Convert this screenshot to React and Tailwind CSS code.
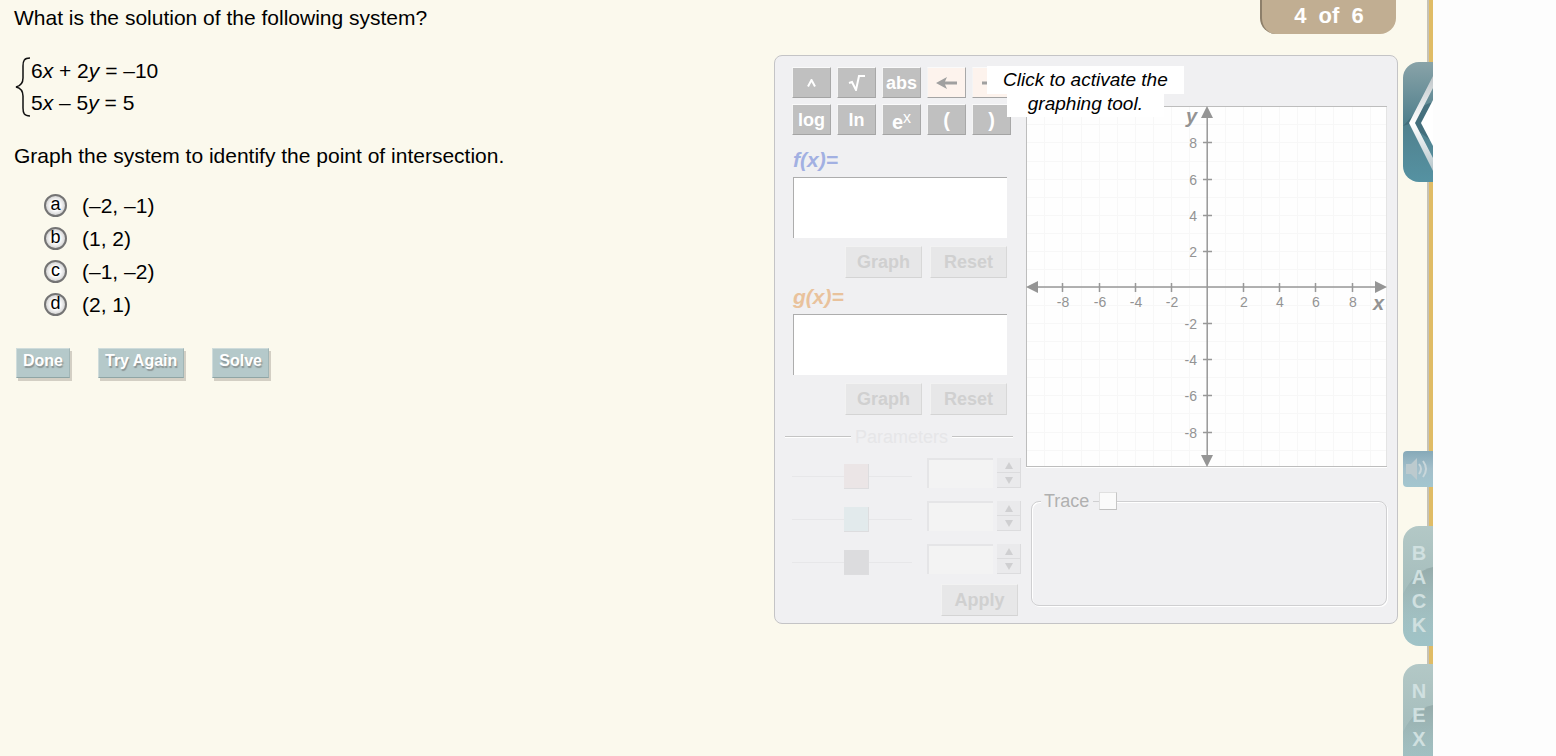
import React, { useState } from 'react';
import clsx from 'clsx';

const choices = [
  { id: 'a', text: '(–2, –1)' },
  { id: 'b', text: '(1, 2)' },
  { id: 'c', text: '(–1, –2)' },
  { id: 'd', text: '(2, 1)' },
];

const parameters = [
  { id: 'red', thumb: '[&::-webkit-slider-thumb]:bg-[#ebe5e6]' },
  { id: 'teal', thumb: '[&::-webkit-slider-thumb]:bg-[#e2eaec]' },
  { id: 'gray', thumb: '[&::-webkit-slider-thumb]:bg-[#dcdcde]' },
];

const ticks = [-8, -6, -4, -2, 2, 4, 6, 8];
const gridLines = Array.from({ length: 19 }, (_, i) => i - 9);

// graph units to svg pixels
const px = (n) => Math.round(181 + n * 18.07);

function ActionButton({ children }) {
  return (
    <button
      type="button"
      className="h-[30px] border border-t-[#cfdcdb] border-l-[#cfdcdb] border-r-[#a2b6b6] border-b-[#8fa5a5] bg-[#b5c9ca] px-[6px] pb-[4px] text-[16px] leading-[24px] font-bold text-white shadow-[2px_3px_0_#d3cfc4] [text-shadow:1px_2px_1px_#8b9494]"
    >
      {children}
    </button>
  );
}

function Key({ label, light, children }) {
  return (
    <button
      type="button"
      aria-label={label}
      className={clsx(
        'flex h-[31px] w-[39px] items-center justify-center border border-t-[#fafafa] border-l-[#f4f4f4] border-r-[#a8a8a8] border-b-[#a4a4a4] text-[18px] leading-[24px] font-bold',
        light ? 'bg-[#fdf3ed] text-[#a0a0a0]' : 'bg-[#c0c0c0] text-white'
      )}
    >
      {children}
    </button>
  );
}

function ToolButton({ children }) {
  return (
    <button
      type="button"
      className="h-8 w-[77px] border border-t-[#f2f2f2] border-l-[#f2f2f2] border-r-[#d8d8d8] border-b-[#d4d4d4] bg-[#e7e7e8] text-[18px] leading-[24px] font-bold text-[#d0d0d0]"
    >
      {children}
    </button>
  );
}

function FunctionEntry({ id, label, labelClass }) {
  return (
    <div className="pr-[14px] pl-2">
      <label htmlFor={id} className={clsx('block text-[21px] leading-[24px] font-bold italic', labelClass)}>
        {label}
      </label>
      <input
        id={id}
        type="text"
        className="mt-[5px] block h-[61px] w-full border-t border-l border-[#adadad] bg-white px-2 text-[21px] text-gray-600 outline-none"
      />
      <div className="mt-2 flex justify-end gap-2">
        <ToolButton>Graph</ToolButton>
        <ToolButton>Reset</ToolButton>
      </div>
    </div>
  );
}

function ParameterRow({ id, thumb }) {
  return (
    <div className="flex items-start pl-[7px]">
      <input
        type="range"
        aria-label={`${id} parameter`}
        defaultValue="55"
        className={clsx(
          'mt-[3px] h-[30px] w-[120px] appearance-none bg-[linear-gradient(#e7e7e9,#e7e7e9)] bg-[length:100%_1px] bg-center bg-no-repeat [&::-webkit-slider-thumb]:size-[25px] [&::-webkit-slider-thumb]:appearance-none [&::-webkit-slider-thumb]:border-r [&::-webkit-slider-thumb]:border-b [&::-webkit-slider-thumb]:border-[#dddddf]',
          thumb
        )}
      />
      <input
        type="text"
        aria-label={`${id} value`}
        className="ml-[15px] h-[30px] w-[66px] border-t-2 border-l-2 border-[#e5e5e7] bg-[#f3f3f3] outline-none"
      />
      <div className="ml-1 flex w-6 flex-col">
        <button type="button" aria-label={`Increase ${id}`} className="flex h-[15px] items-center justify-center border-r border-b border-[#dcdcde] bg-[#eaeaec]">
          <svg width="8" height="7" viewBox="0 0 8 7" fill="#cfcfd1"><path d="M4 0L8 7H0z" /></svg>
        </button>
        <button type="button" aria-label={`Decrease ${id}`} className="flex h-[15px] items-center justify-center border-r border-b border-[#dcdcde] bg-[#eaeaec]">
          <svg width="8" height="7" viewBox="0 0 8 7" fill="#cfcfd1"><path d="M4 7L8 0H0z" /></svg>
        </button>
      </div>
    </div>
  );
}

function Graph() {
  return (
    <svg
      viewBox="0 0 361 361"
      className="block w-full border-b border-white bg-[#fefefe]"
      fontFamily="Liberation Sans, Arial, sans-serif"
      fontSize="14"
      fill="#939393"
    >
      {gridLines.map((n) => (
        <g key={n} stroke="#f7f7f7">
          <path d={`M${px(n) + 0.5} 1V360`} />
          <path d={`M1 ${px(n) + 0.5}H360`} />
        </g>
      ))}
      <path d="M0.5 361V0.5H361" fill="none" stroke="#bdbdbd" />
      <path d="M0 360.5H361" stroke="#bdbdbd" />
      <path d="M360.5 1V360" stroke="#e4e4e4" />
      <path d="M181.2 8V353M8 181H353" stroke="#989898" strokeWidth="1.5" />
      <path d="M181 0l6 12h-12zM181 361l6-12h-12zM0 181l12-6v12zM361 181l-12-6v12z" fill="#959595" />
      {ticks.map((n) => (
        <g key={n}>
          <path d={`M${px(n) + 0.5} 177v9M177 ${px(-n) + 0.5}h9`} stroke="#989898" strokeWidth="1.5" />
          <text x={px(n) + 1} y="201" textAnchor="middle">{n}</text>
          <text x="171" y={px(-n) + 6} textAnchor="end">{n}</text>
        </g>
      ))}
      <text x="160" y="17" fontSize="20" fontWeight="bold" fontStyle="italic">y</text>
      <text x="347" y="204" fontSize="20" fontWeight="bold" fontStyle="italic">x</text>
    </svg>
  );
}

function GraphingTool() {
  const [trace, setTrace] = useState(false);

  return (
    <section className="relative flex gap-[5px] rounded-lg border border-[#c4c4c6] bg-[#f0f0f2] px-[10px] pt-[11px] pb-[7px]">
      <div className="w-[236px] shrink-0">
        <div className="grid w-fit grid-cols-5 gap-[6px] pl-[7px]">
          <Key label="power">
            <svg width="9" height="8" viewBox="0 0 9 8" fill="none" stroke="#fff" strokeWidth="2"><path d="M1 7.500L4.500 1L8 7.500" /></svg>
          </Key>
          <Key label="square root">
            <svg width="18" height="16" viewBox="0 0 18 16" fill="none" stroke="#fff" strokeWidth="2"><path d="M1 8l3-1 4 8L11 1h6" /></svg>
          </Key>
          <Key>abs</Key>
          <Key light label="move left">
            <svg width="21" height="14" viewBox="0 0 21 14" fill="currentColor"><path d="M0 7L11 1L9 5.500H21V8.500H9L11 13z" /></svg>
          </Key>
          <Key light label="move right">
            <svg width="21" height="14" viewBox="0 0 21 14" fill="currentColor"><path d="M21 7L10 1L12 5.500H1V8.500H12L10 13z" /></svg>
          </Key>
          <Key>log</Key>
          <Key>ln</Key>
          <Key>
            <span className="flex items-end pt-1 text-[20px] leading-[22px]">
              e<sup className="top-0 self-start text-[16px] leading-[14px] font-normal">x</sup>
            </span>
          </Key>
          <Key><span className="text-[20px]">(</span></Key>
          <Key><span className="text-[20px]">)</span></Key>
        </div>

        <div className="mt-[13px] flex flex-col gap-[7px]">
          <FunctionEntry id="fx" label="f(x)=" labelClass="text-[#a2b0e2]" />
          <FunctionEntry id="gx" label="g(x)=" labelClass="text-[#e9c29c]" />
        </div>

        <h3 className="mt-3 flex items-center gap-1 pr-2 text-[18px] leading-[20px] text-[#e6e6e8]">
          <span className="h-[2px] w-[66px] border-t border-b border-t-[#c4c4c4] border-b-white" />
          Parameters
          <span className="h-[2px] flex-1 border-t border-b border-t-[#c4c4c4] border-b-white" />
        </h3>

        <div className="mt-[11px] flex flex-col gap-[10px]">
          {parameters.map((p) => (
            <ParameterRow key={p.id} id={p.id} thumb={p.thumb} />
          ))}
        </div>

        <div className="mt-[7px] flex justify-end pr-[3px]">
          <ToolButton>Apply</ToolButton>
        </div>
      </div>

      <div className="flex-1 pt-[39px]">
        <Graph />
        <fieldset className="mt-[23px] ml-[5px] h-[115px] rounded-lg border border-[#cfcfd1] shadow-[inset_1px_1px_0_#fff,1px_1px_0_#fff]">
          <legend className="ml-[9px] bg-[#f0f0f2] pl-[3px]">
            <label className="flex items-center text-[18px] leading-[20px] text-[#b0b0b0]">
              Trace
              <span className="ml-1 h-px w-[6px] bg-[#cfcfd1]" />
              <input
                type="checkbox"
                checked={trace}
                onChange={(e) => setTrace(e.target.checked)}
                className="size-[18px] appearance-none border border-t-[#e0e0e0] border-l-[#e0e0e0] border-r-[#c6c6c6] border-b-[#c0c0c0] bg-[#fafafa] checked:bg-[#c0c0c0]"
              />
            </label>
          </legend>
        </fieldset>
      </div>

      <button type="button" className="absolute top-[10px] left-[212px] flex flex-col items-center text-[19px] text-black italic">
        <span className="bg-white px-4 leading-[28px]">Click to activate the</span>
        <span className="bg-white px-[21px] pb-[3px] leading-[20px]">graphing tool.</span>
      </button>
    </section>
  );
}

function SideTab({ word }) {
  return (
    <button type="button" aria-label={word} className="relative h-[120px] w-full shrink-0 overflow-hidden rounded-l-2xl bg-linear-to-b from-[#b3c8c6] via-[#a6bebd] to-[#9fc3c7]">
      <svg className="absolute inset-0" width="30" height="120" viewBox="0 0 30 120">
        <defs>
          <linearGradient id={`shade-${word}`} x1="0" y1="0" x2="0" y2="1">
            <stop offset="0" stopColor="#93a9a8" stopOpacity="0.9" />
            <stop offset="1" stopColor="#9fc3c7" stopOpacity="0" />
          </linearGradient>
        </defs>
        <path d="M30 41C17 44 8 52 0 68V110H30z" fill={`url(#shade-${word})`} />
      </svg>
      <span className="relative flex h-full flex-col items-center pt-[15px] pl-[2px] text-[20px] leading-[24px] font-bold text-[#d0e0e0]">
        {word.split('').map((letter) => (
          <span key={letter}>{letter}</span>
        ))}
      </span>
    </button>
  );
}

function SideRail() {
  return (
    <nav className="flex w-[30px] shrink-0 flex-col bg-[linear-gradient(to_right,#fbf9ed_24px,#c5c2b6_24px,#c5c2b6_26px,#e0bc66_26px)] pt-[62px]">
      <button type="button" aria-label="Open menu" className="h-[120px] shrink-0 overflow-hidden rounded-l-2xl bg-linear-to-b from-[#89a3a8] via-[#50808d] to-[#5592a2]">
        <svg width="30" height="120" viewBox="0 0 30 120">
          <defs>
            <linearGradient id="chevron" x1="0" y1="0" x2="0" y2="1">
              <stop offset="0" stopColor="#bfc6c9" />
              <stop offset="0.5" stopColor="#ffffff" />
              <stop offset="1" stopColor="#b5c5ca" />
            </linearGradient>
          </defs>
          <path d="M0 64L16 47Q22 42 30 40V80L6 62z" fill="#3d6775" opacity="0.7" />
          <path d="M30 14V26L12 61L30 96V109L6 61z" fill="url(#chevron)" />
          <path d="M30 38V84L18 61z" fill="#ffffff" />
        </svg>
      </button>
      <button type="button" aria-label="Audio" className="mt-[269px] h-9 shrink-0 overflow-hidden rounded-l bg-linear-to-b from-[#86a9b8] via-[#a3bfca] to-[#a3c6cf]">
        <svg width="30" height="36" viewBox="0 0 30 36" fill="none">
          <path d="M3 13h5l6-6v22l-6-6H3z" fill="#bccace" />
          <path d="M16 13q4 5 0 10M20 10q6 8 0 16" stroke="#c8d6da" strokeWidth="2" />
        </svg>
      </button>
      <div className="mt-[39px] flex flex-col gap-[18px]">
        <SideTab word="BACK" />
        <SideTab word="NEXT" />
      </div>
    </nav>
  );
}

export default function App() {
  const [answer, setAnswer] = useState(null);

  return (
    <div className="flex h-screen overflow-hidden bg-[#fdfdfd] pr-[123px] font-['Liberation_Sans',Arial,sans-serif] text-black">
      <main className="flex flex-1 bg-[#fbf9ed] pr-[5px]">
        <section className="flex-1 pt-[6px] pl-[14px] text-[21px] leading-[24px]">
          <p>What is the solution of the following system?</p>

          <div className="mt-[25px] flex items-center">
            <svg width="17" height="60" viewBox="0 0 17 60" fill="none" stroke="#111" strokeWidth="1.5">
              <path d="M16 1C10 1 9 4 9 9V21C9 26 6 29 2 30C6 31 9 34 9 39V51C9 56 10 59 16 59" />
            </svg>
            <div className="leading-[32px]">
              <p>6<i>x</i> + 2<i>y</i> = –10</p>
              <p>5<i>x</i> – 5<i>y</i> = 5</p>
            </div>
          </div>

          <p className="mt-[25px]">Graph the system to identify the point of intersection.</p>

          <div role="radiogroup" aria-label="Choices" className="mt-[21px] flex flex-col pl-[30px]">
            {choices.map((choice) => (
              <label key={choice.id} className="flex h-[33px] items-center gap-[15px]">
                <span className="grid size-[23px] place-items-center">
                  <input
                    type="radio"
                    name="choice"
                    checked={answer === choice.id}
                    onChange={() => setAnswer(choice.id)}
                    className="col-start-1 row-start-1 size-[23px] appearance-none rounded-full border-2 border-[#747474] bg-[radial-gradient(circle,#ffffff_35%,#b4b4b4_100%)] checked:bg-gray-400"
                  />
                  <span className="col-start-1 row-start-1 pb-[3px] text-[18px] leading-[20px]">{choice.id}</span>
                </span>
                <span>{choice.text}</span>
              </label>
            ))}
          </div>

          <div className="mt-[27px] flex gap-7 pl-[2px]">
            <ActionButton>Done</ActionButton>
            <ActionButton>Try Again</ActionButton>
            <ActionButton>Solve</ActionButton>
          </div>
        </section>

        <aside className="flex w-[624px] shrink-0 flex-col">
          <div className="mr-[2px] flex h-[34px] w-[136px] justify-center gap-3 self-end rounded-b-2xl border-l-2 border-[#8d7f6a] bg-[#c1ae92] text-[22px] leading-[31px] font-bold text-white">
            <span>4</span>
            <span>of</span>
            <span>6</span>
          </div>
          <div className="mt-[21px]">
            <GraphingTool />
          </div>
        </aside>
      </main>

      <SideRail />
    </div>
  );
}
